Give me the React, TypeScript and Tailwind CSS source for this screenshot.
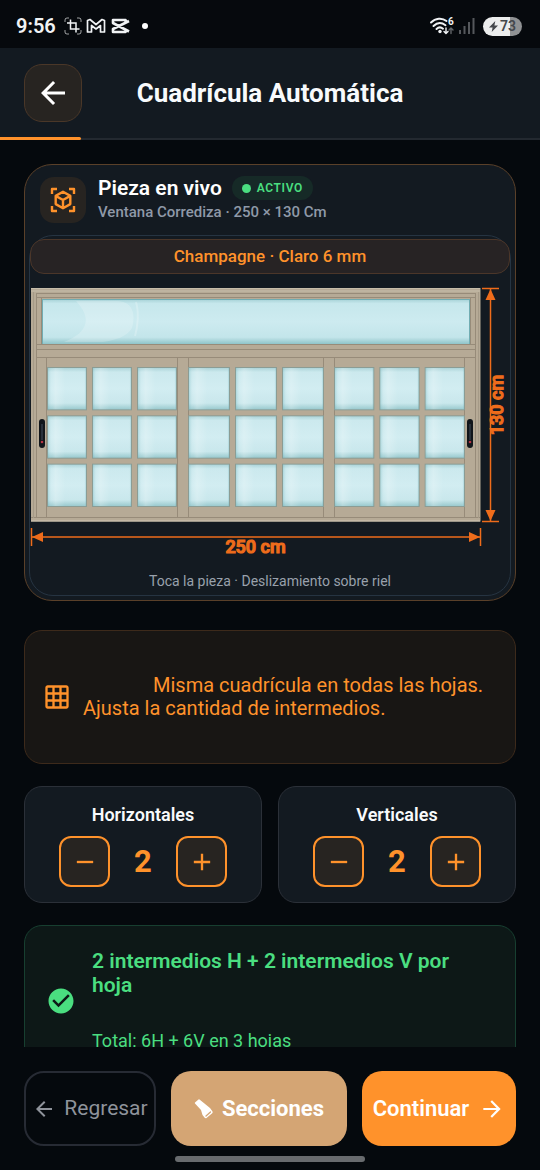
import { useState } from "react";
import { MdAdd, MdArrowBack, MdArrowForward, MdCheckCircle, MdGridOn, MdRemove } from "react-icons/md";

const HOJAS = [
  { x: 48, w: 128 },
  { x: 189, w: 134 },
  { x: 335, w: 129 },
];

const GLASS_TOP = 368;
const GLASS_HEIGHT = 138;
const BAR = 7;

function StatusBar() {
  return (
    <div className="flex h-12 shrink-0 items-center justify-between bg-[#06090d] pr-[18px] pl-4 text-[#f1f3f5]">
      <div className="flex items-center gap-2 pt-1">
        <span className="text-xl font-semibold">9:56</span>
        <div className="flex items-center gap-1">
          <svg viewBox="0 0 18 18" className="size-[18px]" fill="none" stroke="currentColor">
            <path d="M1 5V3a2 2 0 012-2h2M13 1h2a2 2 0 012 2v2M17 13v2a2 2 0 01-2 2h-2M5 17H3a2 2 0 01-2-2v-2" strokeWidth={1} opacity={0.65} />
            <path d="M6.500 2.500v9.500h9M3 6h9v9.500" strokeWidth={1.500} />
          </svg>
          <svg viewBox="0 0 20 16" className="h-4 w-5" fill="none" stroke="currentColor" strokeWidth={1.700} strokeLinejoin="round">
            <path d="M1.500 2.500 4 1.500l6 5 6-5 2.500 1V14h-4V7.500L10 11 5.500 7.500V14h-4z" />
          </svg>
          <svg viewBox="0 0 20 16" className="h-4 w-5" fill="none" stroke="currentColor" strokeWidth={2.600} strokeLinejoin="round">
            <path d="M19 3 3 11v3h12.500v-2.500M15.500 4.500V2H3v3l16 8.500" />
          </svg>
          <span className="ml-2 size-[6px] rounded-full bg-white" />
        </div>
      </div>
      <div className="flex items-center gap-1 pt-1">
        <svg viewBox="0 0 26 20" className="h-5 w-[26px]" fill="none" stroke="currentColor" strokeLinecap="round">
          <path d="M2 6.500c4.500-4.500 11-5 15.500-1.500M4.500 10c3.500-3.500 8-3.800 12-.8M7.500 13c2-2 4.500-2 6.500-.3" strokeWidth={2} />
          <circle cx="11" cy="15.500" r="1.700" fill="currentColor" stroke="none" />
          <path d="M17 12v5.500m-2-2 2 2 2-2" strokeWidth={1.400} />
          <path d="M22 17.500V12m-2 2 2-2 2 2" strokeWidth={1.400} opacity={0.4} />
          <text x="19" y="9" fontFamily="Roboto" fontSize="10" fontWeight="700" fill="currentColor" stroke="none">6</text>
        </svg>
        <svg viewBox="0 0 16 18" className="h-[18px] w-4" fill="#55585c">
          <path d="M0 13h2v4H0zM4.500 9h2v8h-2zM9 5h2v12H9zM13.500 1h2v16h-2z" />
        </svg>
        <div className="ml-1 flex h-[19px] w-[39px] items-center justify-center gap-[2px] rounded-full bg-linear-to-r from-[#eceded] from-70% to-[#8f9193] to-70% text-[#44474b]">
          <svg viewBox="0 0 10 12" className="h-[11px] w-[9px]" fill="currentColor">
            <path d="M7 0 0 7h4L3 12l7-7H6z" />
          </svg>
          <span className="text-sm leading-none font-semibold">73</span>
        </div>
      </div>
    </div>
  );
}

function CubeScan() {
  return (
    <svg viewBox="0 0 26 26" className="size-[26px] text-[#ff922b]" fill="none" stroke="currentColor" strokeWidth={2.400} strokeLinejoin="round">
      <path d="M2 7V2h5M19 2h5v5M24 19v5h-5M7 24H2v-5" />
      <path d="m13 4.800 7.300 4.100v8.200L13 21.200l-7.300-4.100V8.900zM5.700 8.900l7.300 4.100 7.300-4.100M13 13v8.200" />
    </svg>
  );
}

function Handle({ x }: { x: number }) {
  return (
    <g>
      <rect x={x} y="419" width="6" height="29" rx="3" fill="#11161b" />
      <path d={`M${x + 3} 424v16`} stroke="#29313b" strokeWidth="2" />
      <circle cx={x + 3} cy="442" r="1.300" fill="#b53544" />
    </g>
  );
}

function WindowDrawing({ h, v }: { h: number; v: number }) {
  return (
    <svg viewBox="30 280 480 280" className="h-auto w-full" role="img" aria-label="Ventana corrediza de 250 por 130 cm">
      <defs>
        <linearGradient id="glass" x1="0" y1="0" x2="0" y2="1">
          <stop offset="0" stopColor="#a4d0d5" />
          <stop offset="0.100" stopColor="#c6e7ec" />
          <stop offset="0.500" stopColor="#cdebf0" />
          <stop offset="0.850" stopColor="#c3e5ea" />
          <stop offset="1" stopColor="#8fc4c9" />
        </linearGradient>
        <linearGradient id="shine" x1="0" y1="0" x2="1" y2="0">
          <stop offset="0" stopColor="#7fbcc3" stopOpacity="0.400" />
          <stop offset="0.100" stopColor="#fff" stopOpacity="0.150" />
          <stop offset="0.200" stopColor="#fff" stopOpacity="0.300" />
          <stop offset="0.450" stopColor="#fff" stopOpacity="0.100" />
          <stop offset="0.950" stopColor="#fff" stopOpacity="0.100" />
          <stop offset="1" stopColor="#6fb0b8" stopOpacity="0.400" />
        </linearGradient>
      </defs>

      {/* marco */}
      <rect x="31" y="288" width="449.500" height="233.500" fill="#b6aa96" />
      <path d="M31 288.500h449M31 291h449" stroke="#c6bdaa" />
      <path d="M37 293.500h439M37 297.500h439M37 344.500h439M37 349.500h439M37 357.500h439M31 517.500h449" stroke="#978b79" />
      <path d="M36.500 293v224M475.500 293v224M41.500 298v46M470.500 298v46M46.500 357v160M177.500 357v160M188.500 357v160M323.500 357v160M334.500 357v160M464.500 357v160" stroke="#978b79" />
      <path d="M478.500 292v226M33.500 292v226" stroke="#a59a87" />
      <path d="M31 521h449" stroke="#d0c7b6" />

      {/* paño fijo superior */}
      <rect x="42" y="299" width="428" height="45" fill="url(#glass)" />
      <path d="M76 301h41c16 0 19 14 15 27-5 9-17 12-29 14H64c26-10 27-25 12-41z" fill="#fff" opacity="0.200" />
      <path d="M136 302c3 10 2 24-1 34" stroke="#fff" strokeWidth="2" opacity="0.220" fill="none" />
      <path d="M42.500 299v45M42 299.500h428M469.500 299v45" stroke="#71adb3" />

      {HOJAS.map((hoja) => {
        const w = (hoja.w - BAR * v) / (v + 1);
        const ph = (GLASS_HEIGHT - BAR * h) / (h + 1);
        return Array.from({ length: (v + 1) * (h + 1) }, (_, i) => {
          const x = hoja.x + (i % (v + 1)) * (w + BAR);
          const y = GLASS_TOP + Math.floor(i / (v + 1)) * (ph + BAR);
          return (
            <g key={`${hoja.x}-${i}`}>
              <rect x={x - 1} y={y - 1} width={w + 2} height={ph + 2} fill="#8b9c94" />
              <rect x={x} y={y} width={w} height={ph} fill="url(#glass)" />
              <rect x={x} y={y} width={w} height={ph} fill="url(#shine)" />
            </g>
          );
        });
      })}

      <Handle x={39} />
      <Handle x={467} />

      {/* cotas */}
      <g stroke="#ee6c1b" fill="#ee6c1b" fontFamily="Roboto, sans-serif" fontSize="18" fontWeight="500" textAnchor="middle">
        <path d="M31.500 528v18M480.500 528v18M482 288.500h17M482 521.500h17" strokeWidth="1.500" />
        <path d="M32 537h448M490.500 289v232" strokeWidth="1.500" />
        <path d="m32 537 11-5v10zM480 537l-11-5v10zM490.500 289l-5 11h10zM490.500 521l-5-11h10z" stroke="none" />
        <text x="255.500" y="553" strokeWidth="1.200">250 cm</text>
        <text x="-405" y="503" strokeWidth="1.200" transform="rotate(-90)">130 cm</text>
      </g>
    </svg>
  );
}

function Stepper({ label, value, onChange }: { label: string; value: number; onChange: (n: number) => void }) {
  const btn = "flex size-[51px] items-center justify-center rounded-xl border-2 border-[#ff922b] bg-[#272421] text-[#ff922b]";
  return (
    <div className="flex-1 rounded-[18px] border border-[#2b3038] bg-[#131a21] pt-4 pb-[15px] text-center">
      <h3 className="text-lg leading-6 font-semibold text-[#f8fafc]">{label}</h3>
      <div className="mt-[9px] flex items-center justify-center">
        <button type="button" className={btn} aria-label={`Menos ${label}`} onClick={() => onChange(Math.max(0, value - 1))}>
          <MdRemove className="size-7" />
        </button>
        <span className="w-[66px] text-[31px] leading-9 font-bold text-[#ff922b]">{value}</span>
        <button type="button" className={btn} aria-label={`Más ${label}`} onClick={() => onChange(value + 1)}>
          <MdAdd className="size-7" />
        </button>
      </div>
    </div>
  );
}

export default function App() {
  const [h, setH] = useState(2);
  const [v, setV] = useState(2);

  return (
    <div className="flex h-screen flex-col bg-[#05090d] font-[Roboto,sans-serif]">
      <StatusBar />

      <header className="relative shrink-0 border-b-2 border-[#232930] bg-[#131a21] px-6 py-4">
        <div className="grid grid-cols-[58px_1fr_58px] items-center">
          <button type="button" aria-label="Volver" className="flex size-[58px] items-center justify-center rounded-[18px] border border-[#4a3728] bg-[#272421] text-white">
            <MdArrowBack className="size-9" />
          </button>
          <h1 className="text-center text-[26px] leading-8 font-bold text-[#f8fafc]">Cuadrícula Automática</h1>
        </div>
        <div className="absolute -bottom-[2px] left-0 h-[3px] w-[15%] rounded-r bg-[#ff922b]" />
      </header>

      <main className="min-h-0 flex-1 overflow-y-auto px-6 pt-6 [scrollbar-width:none]">
        <section className="rounded-[28px] border border-[#5a4029] bg-[#131a21] px-1 pb-1">
          <div className="flex items-center gap-3 px-[11px] py-[11px]">
            <div className="flex size-[46px] items-center justify-center rounded-[14px] bg-[#272421]">
              <CubeScan />
            </div>
            <div>
              <div className="flex items-center gap-[10px]">
                <h2 className="text-[21px] leading-6 font-semibold text-white">Pieza en vivo</h2>
                <span className="flex h-6 items-center gap-[6px] rounded-full bg-[#162a27] px-[10px] text-xs font-semibold tracking-wider text-[#4ade80]">
                  <span className="size-[9px] rounded-full bg-[#4ade80]" />
                  ACTIVO
                </span>
              </div>
              <p className="text-[15px] leading-6 font-medium text-[#8f99a8]">Ventana Corrediza · 250 × 130 Cm</p>
            </div>
          </div>

          <div className="rounded-[24px] border border-[#263442] pt-[3px]">
            <div className="rounded-[14px] border border-[#4b3629] bg-[#272324] py-[5px] text-center text-[17px] leading-[23px] font-medium text-[#ff922b]">
              Champagne · Claro 6 mm
            </div>
            <div className="pt-[6px]">
              <WindowDrawing h={h} v={v} />
            </div>
            <p className="pt-[11px] pb-1 text-center text-sm leading-5 text-[#99a1ac]">Toca la pieza · Deslizamiento sobre riel</p>
          </div>
        </section>

        <section className="mt-[29px] flex min-h-[134px] items-center gap-3 rounded-[18px] border border-[#3d2a1b] bg-[#181614] px-[18px] text-[#ff922b]">
          <MdGridOn className="size-7 shrink-0" />
          <p className="indent-[70px] text-xl leading-[23px] font-normal">
            Misma cuadrícula en todas las hojas.
            <span className="block indent-0">Ajusta la cantidad de intermedios.</span>
          </p>
        </section>

        <div className="mt-[22px] flex gap-4">
          <Stepper label="Horizontales" value={h} onChange={setH} />
          <Stepper label="Verticales" value={v} onChange={setV} />
        </div>

        <section className="mt-[22px] flex min-h-[152px] items-center gap-4 rounded-[18px] border border-[#173f30] bg-[#0d1817] px-[21px] text-[#4ade80]">
          <MdCheckCircle className="size-[30px] shrink-0" />
          <div className="flex flex-col gap-8">
            <p className="text-[21px] leading-6 font-semibold">
              {`${h} intermedios H + ${v} intermedios V por hoja`}
            </p>
            <p className="text-lg leading-6">
              {`Total: ${h * HOJAS.length}H + ${v * HOJAS.length}V en ${HOJAS.length} hojas`}
            </p>
          </div>
        </section>
      </main>

      <footer className="shrink-0 px-6 pt-6 pb-2">
        <div className="grid grid-cols-[6fr_8fr_7fr] gap-[15px] text-[22px]">
          <button type="button" className="flex h-[75px] items-center justify-center gap-2 rounded-[20px] border-2 border-[#272b34] text-[21px] text-[#8f939b]">
            <MdArrowBack className="size-6" />
            Regresar
          </button>
          <button type="button" className="flex h-[75px] items-center justify-center gap-2 rounded-[20px] bg-[#d4a574] font-bold text-white">
            <svg viewBox="0 0 20 20" className="size-5" fill="currentColor">
              <path d="M1 3.500 4.500.500Q5 0 5.500.500L16 9l2.500 3.500q.500 1-.300 1.800l-5.700 4.700q-1 .600-1.800-.200L8.500 16 7 11 1 4.500Q.500 4 1 3.500z" />
              <path d="m12 17 4.500-4" stroke="#d4a574" strokeWidth={1.300} strokeLinecap="round" />
            </svg>
            Secciones
          </button>
          <button type="button" className="flex h-[75px] items-center justify-center gap-[10px] rounded-[20px] bg-[#ff922b] font-semibold text-white">
            Continuar
            <MdArrowForward className="size-[26px]" />
          </button>
        </div>
        <div className="mx-auto mt-[10px] h-[6px] w-[190px] rounded-full bg-[#686b6e]" />
      </footer>
    </div>
  );
}
